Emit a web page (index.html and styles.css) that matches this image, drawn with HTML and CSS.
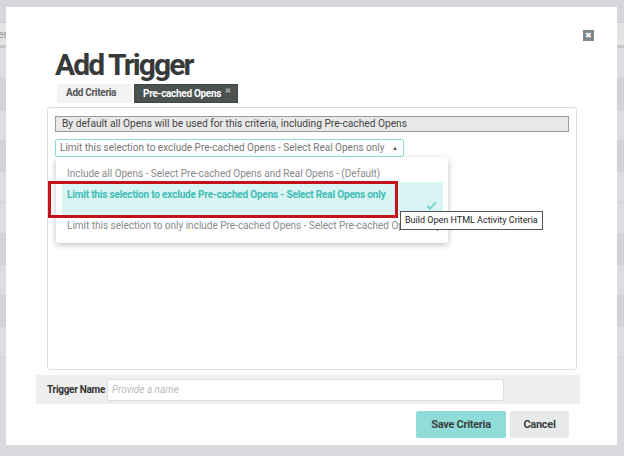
FILE: index.html
```html
<!DOCTYPE html>
<html lang="en">
<head>
  <meta charset="UTF-8" />
  <title>Add Trigger</title>
  <link rel="stylesheet" href="styles.css">
</head>
<body>
  <!-- page behind the modal -->
  <div class="backdrop">
    <div class="bg-row top"></div>
    <div class="bg-row bar"><span>er</span></div>
    <div class="bg-row"></div>
    <div class="bg-row dark"></div>
    <div class="bg-row"></div>
    <div class="bg-row dark"></div>
    <div class="bg-row"></div>
    <div class="bg-row"></div>
    <div class="bg-row dark"></div>
    <div class="bg-row"></div>
    <div class="bg-row dark"></div>
    <div class="bg-row"></div>
  </div>

  <div class="modal">
    <button class="close-btn">&#10006;</button>
    <h1 class="title">Add Trigger</h1>
    <div class="tabs">
      <span class="tab">Add Criteria</span>
      <span class="tab active">Pre-cached Opens <i>&#10006;</i></span>
    </div>

    <div class="panel">
      <div class="info">By default all Opens will be used for this criteria, including Pre-cached Opens</div>
      <div class="select">
        Limit this selection to exclude Pre-cached Opens - Select Real Opens only
        <span class="caret">&#9650;</span>
      </div>

      <div class="dropdown">
        <div class="option">Include all Opens - Select Pre-cached Opens and Real Opens - (Default)</div>
        <div class="option selected">
          Limit this selection to exclude Pre-cached Opens - Select Real Opens only
          <svg class="check" width="11" height="9" viewBox="0 0 11 9">
            <path d="M1 4.5 L4 7.5 L10 1.5" fill="none" stroke="#7fd3cf" stroke-width="2"/>
          </svg>
        </div>
        <div class="option">Limit this selection to only include Pre-cached Opens - Select Pre-cached Opens only</div>
      </div>
      <div class="highlight"></div>
      <div class="tooltip">Build Open HTML Activity Criteria</div>
    </div>

    <div class="name-row">
      <label>Trigger Name</label>
      <input type="text" placeholder="Provide a name" />
    </div>

    <div class="actions">
      <button class="btn save">Save Criteria</button>
      <button class="btn cancel">Cancel</button>
    </div>
  </div>
</body>
</html>
```

FILE: styles.css
```css
body {
  margin: 0;
  width: 624px;
  height: 456px;
  overflow: hidden;
  background: #d9dadd;
  font-family: Roboto, "Liberation Sans", sans-serif;
  position: relative;
}

/* page behind */
.backdrop { display: flex; flex-direction: column; }
.bg-row { height: 30px; border-bottom: 1px solid #cfd0d3; background: #dcdde0; }
.bg-row.top { height: 22px; background: #d6d7da; }
.bg-row.bar { height: 22px; background: #e3e4e6; border-bottom: 3px solid #c6c7ca; }
.bg-row.bar span { font-size: 11px; color: #999; line-height: 22px; margin-left: -2px; }
.bg-row.dark { background: #d2d3d6; }

.modal {
  position: absolute;
  left: 6px; top: 7px;
  width: 611px; height: 438px;
  background: #fff;
  box-sizing: border-box;
  padding: 0 37px 0 37px;
}

.close-btn {
  position: absolute;
  left: 577px; top: 23px;
  width: 11px; height: 11px;
  padding: 0;
  border: none;
  background: #7d8689;
  color: #fff;
  font-size: 8px;
  line-height: 11px;
}

h1.title {
  margin: 39px 0 0 12px;
  font-size: 30px;
  font-weight: 700;
  letter-spacing: -1.9px;
  line-height: 38px;
  color: #363b3a;
}

.tabs { display: flex; gap: 2px; margin: 0 0 0 14px; height: 19px; }
.tab {
  font-size: 10px;
  font-weight: 700;
  letter-spacing: -0.3px;
  color: #555;
  background: #f3f3f3;
  padding: 0 9px;
  line-height: 18px;
  width: 57px;
}
.tab.active {
  background: #4b5351;
  color: #fff;
  width: auto;
  padding: 0 6px 0 8px;
  border: 1px solid #3f4645;
  line-height: 17px;
}
.tab.active i { font-style: normal; color: #999; font-size: 7px; vertical-align: top; margin-left: 2px; line-height: 12px; }

.panel {
  position: relative;
  margin: 4px 3px 0 4px;
  height: 253px;
  border: 1px solid #dcdcdc;
  border-radius: 3px;
  padding: 8px 7px 0 7px;
}

.info {
  background: #e9e9e9;
  border: 1px solid #9a9a9a;
  font-size: 10.2px;
  color: #444;
  padding: 0 6px;
  line-height: 14px;
}

.select {
  position: relative;
  width: 349px;
  box-sizing: border-box;
  margin-top: 7px;
  border: 1px solid #8fdad6;
  border-radius: 2px;
  font-size: 10px;
  color: #777;
  line-height: 16px;
  padding: 0 4px;
}
.select .caret { position: absolute; right: 5px; top: 0; font-size: 6px; color: #555; }

.dropdown {
  width: 392px;
  margin-left: 1px;
  background: #fff;
  box-shadow: 0 2px 6px rgba(0,0,0,0.25);
  border-radius: 0 3px 3px 3px;
  padding: 8px 5px 10px 6px;
  box-sizing: border-box;
  height: 86px;
}
.option {
  font-size: 10px;
  color: #8a8a8a;
  padding: 0 5px;
  line-height: 17px;
  white-space: nowrap;
  overflow: hidden;
}
.option.selected {
  position: relative;
  background: #d8f5f4;
  color: #3fbcb6;
  font-weight: 700;
  letter-spacing: -0.18px;
  height: 33px;
  line-height: 26px;
  margin: 0 0 2px;
}
.option.selected .check { position: absolute; right: 6px; top: 19px; }

.highlight {
  position: absolute;
  left: 0; top: 73px;
  width: 350px; height: 37px;
  box-sizing: border-box;
  border: 3px solid #c4121c;
}

.tooltip {
  position: absolute;
  left: 352px; top: 103px;
  background: #fff;
  border: 1px solid #555;
  font-size: 9px;
  color: #222;
  padding: 0 4px;
  line-height: 17px;
}

.name-row {
  margin: 5px 0 0 -7px;
  height: 29px;
  background: #eeeeee;
  display: flex;
  align-items: center;
  padding-left: 11px;
}
.name-row label { font-size: 10px; font-weight: 700; color: #333; letter-spacing: -0.3px; width: 60px; }
.name-row input {
  width: 397px; height: 22px;
  box-sizing: border-box;
  border: 1px solid #ddd;
  border-radius: 2px;
  padding: 0 4px;
  font-size: 10px;
  font-family: inherit;
}
.name-row input::placeholder { font-style: italic; color: #bbb; }

.actions { display: flex; justify-content: flex-end; gap: 4px; margin: 7px 11px 0 0; }
.btn {
  height: 27px;
  border: none;
  border-radius: 2px;
  font-family: inherit;
  font-size: 11px;
  font-weight: 700;
  color: #3b4242;
  letter-spacing: -0.3px;
}
.btn.save { background: #8fdcd9; width: 90px; }
.btn.cancel { background: #e8eaea; width: 59px; }
```
